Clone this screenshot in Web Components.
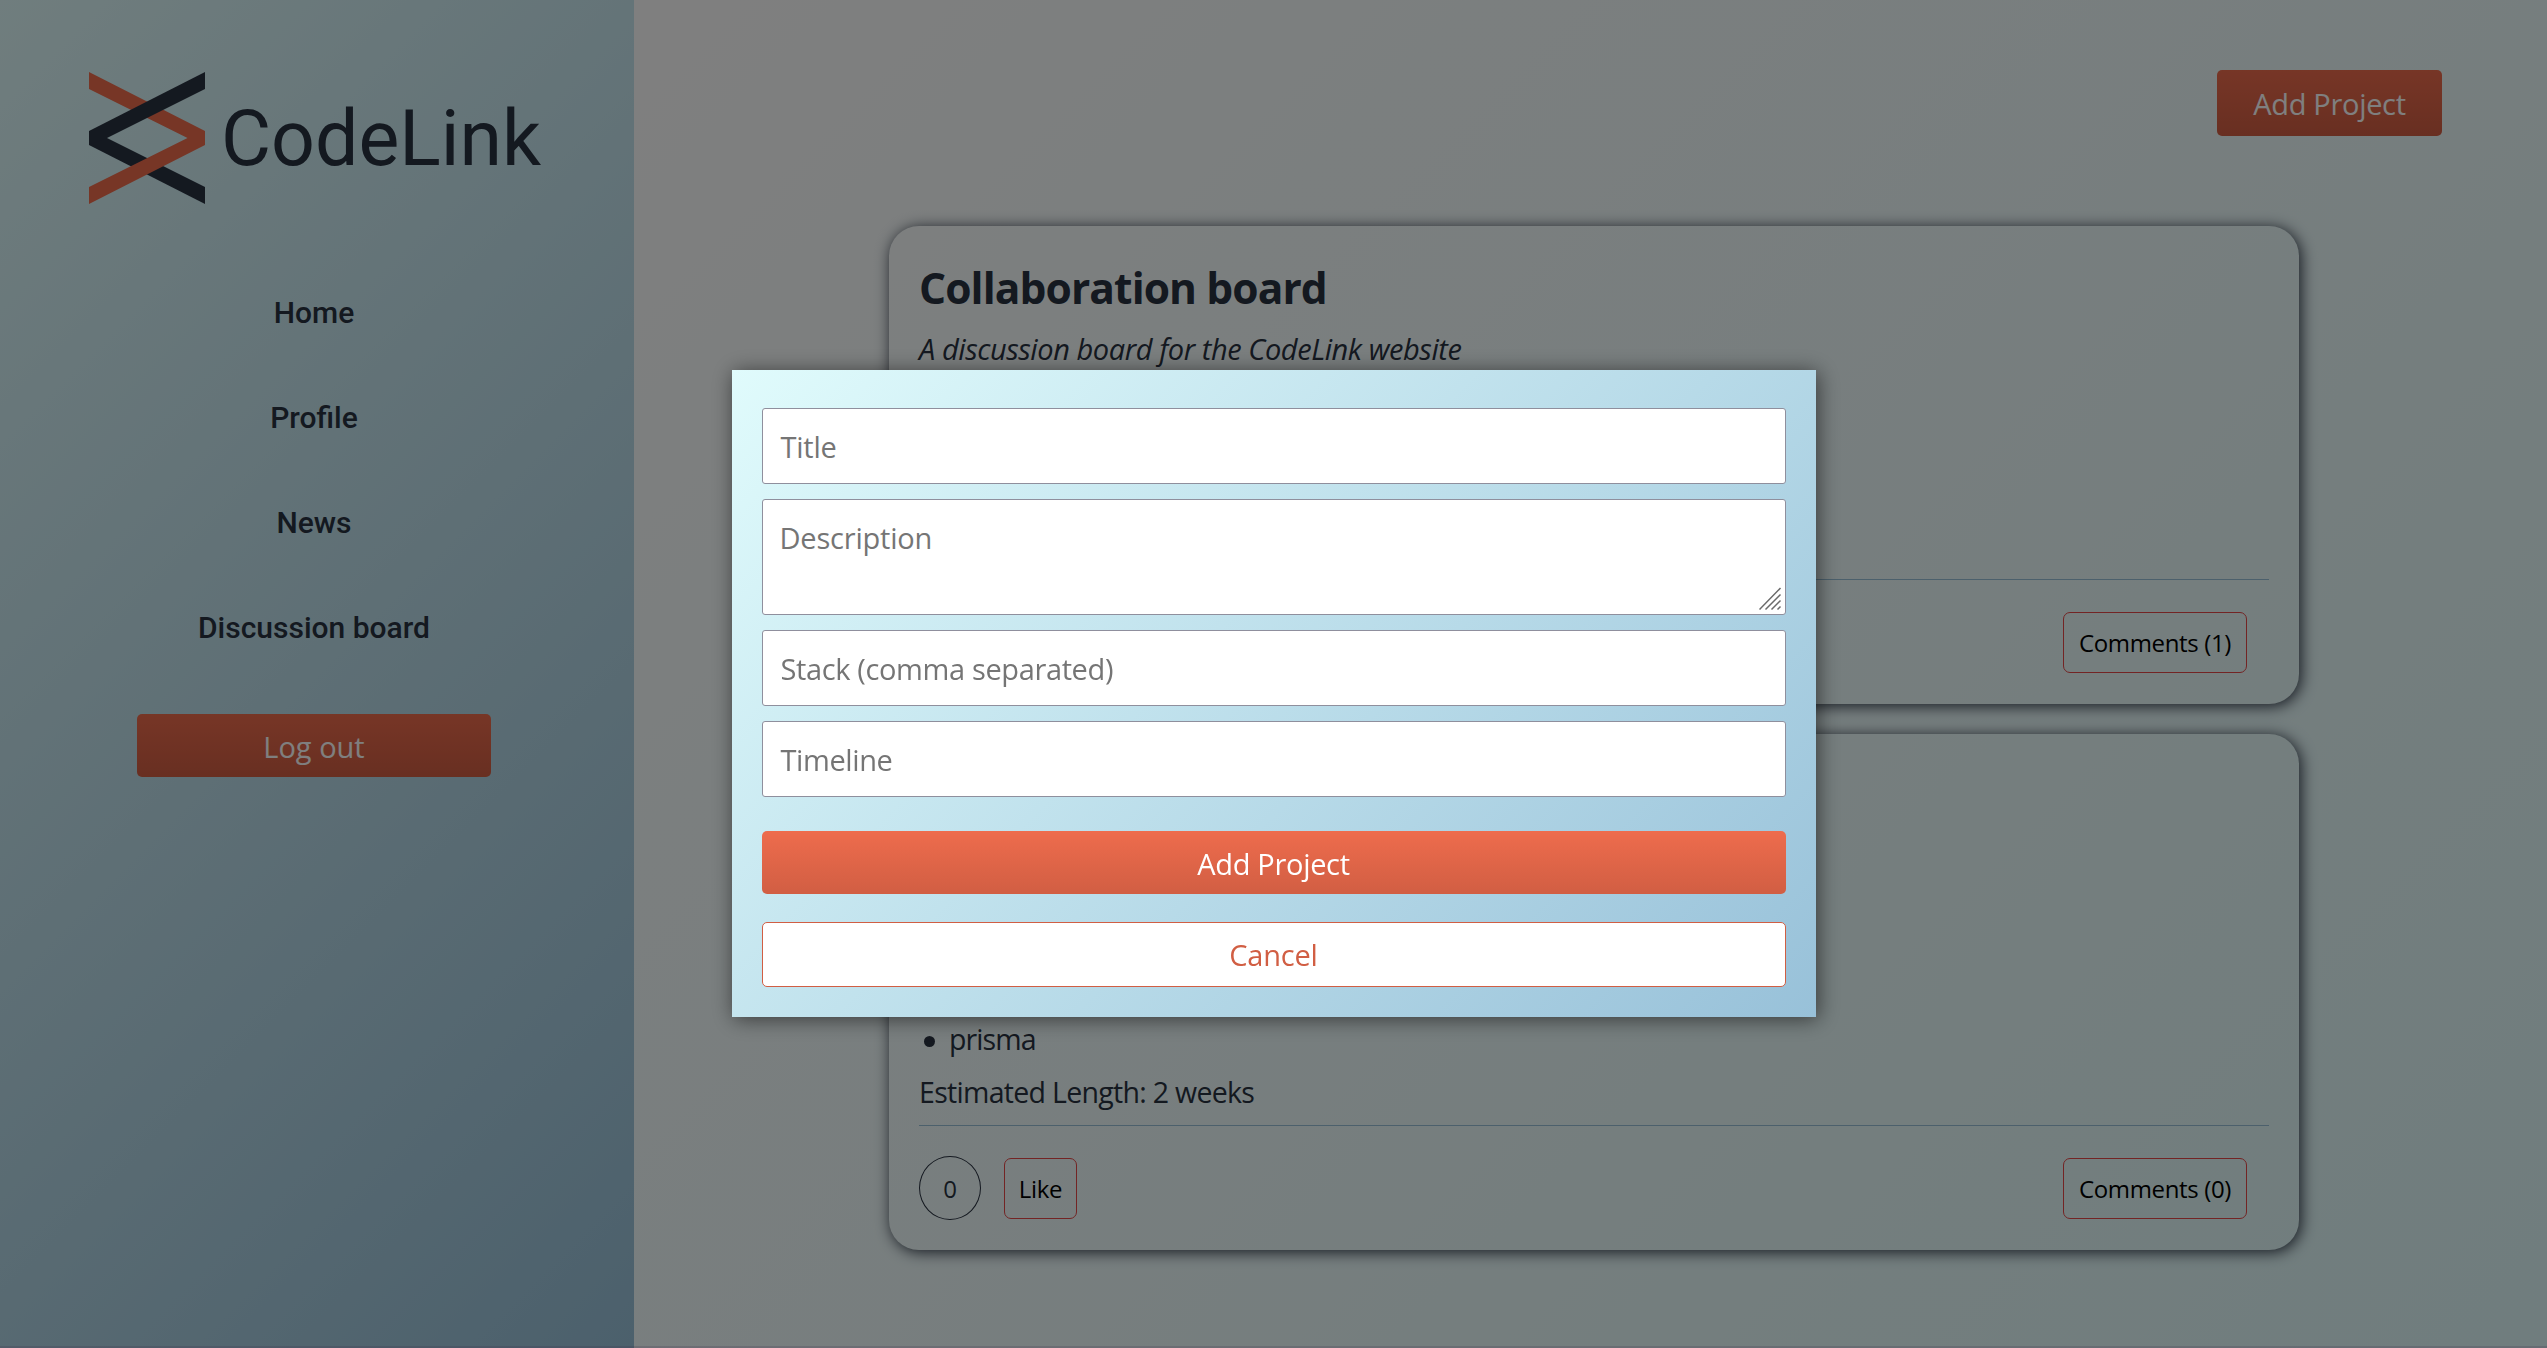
<!DOCTYPE html>
<html lang="en">
<head>
<meta charset="utf-8">
<title>CodeLink</title>
<style>
  :root {
    --dark: #293241;
    --orange: #ee6c4d;
    --orange-deep: #d15e43;
    --blue: #98c1d9;
    --ice: #e0fbfc;
  }
  html, body { margin: 0; height: 100%; overflow: hidden; }
  body { color: var(--dark); font-family: "Open Sans", "Noto Sans", sans-serif; font-size: 29px; }
</style>
</head>
<body>
<code-link-app></code-link-app>

<script>
const define = (name, html) => {
  const template = document.createElement('template');
  template.innerHTML = html;
  customElements.define(name, class extends HTMLElement {
    constructor() {
      super();
      this.attachShadow({ mode: 'open' }).append(template.content.cloneNode(true));
    }
  });
};

define('cl-button', `
  <style>
    :host { display: block; box-sizing: border-box; height: 63px; }
    button {
      display: flex; align-items: center; justify-content: center;
      box-sizing: border-box; width: 100%; height: 100%; margin: 0; padding: var(--drop, 2px) 0 0;
      border: 0; border-radius: 5px; color: #fff;
      background: linear-gradient(var(--orange), var(--orange-deep));
      font: 29px "Open Sans", "Noto Sans", sans-serif; letter-spacing: var(--track, -0.32px);
    }
    :host([outline]) button { background: #fff; color: var(--orange-deep); border: 1px solid var(--orange-deep); padding: 0; }
  </style>
  <button><slot></slot></button>`);

define('cl-small-button', `
  <style>
    :host { display: block; height: 61px; }
    button {
      box-sizing: border-box; width: 100%; height: 100%; padding: 0; margin: 0;
      border: 1px solid #e64848; border-radius: 7px; background: none; color: #000;
      font: 24px "Open Sans", "Noto Sans", sans-serif; letter-spacing: -0.34px;
    }
  </style>
  <button><slot></slot></button>`);

define('cl-logo', `
  <style>
    :host { display: flex; align-items: center; gap: 16px; height: 132px; }
    svg { display: block; width: 116px; height: 132px; flex: none; }
    span { font: 400 77px/132px Roboto, sans-serif; letter-spacing: 0; padding-top: 1px; }
  </style>
  <svg viewBox="0 0 116 132" aria-hidden="true">
    <polygon fill="#293241" points="0,59 0,73 116,132 116,115 18,66"/>
    <polygon fill="#ee6c4d" points="0,0 116,59 116,73 0,132 0,115 98.5,66 0,17"/>
    <polygon fill="#293241" points="116,0 0,59 0,73 18,66 116,17"/>
  </svg>
  <span>CodeLink</span>`);

define('cl-nav-link', `
  <style>
    :host { display: block; }
    a { color: inherit; text-decoration: none; font: 500 30px/35px Roboto, sans-serif; letter-spacing: 0; display: block; }
  </style>
  <a><slot></slot></a>`);

define('cl-sidebar', `
  <style>
    :host {
      display: flex; flex-direction: column; align-items: center; box-sizing: border-box;
      width: 634px; height: 100%; flex: none; padding: 72px 6px 0 0;
      background: linear-gradient(135deg, var(--ice), var(--blue));
    }
    cl-logo { align-self: flex-start; margin-left: 89px; }
    nav { display: flex; flex-direction: column; align-items: center; gap: 70px; margin-top: 91px; }
    cl-button { width: 354px; margin-top: 69px; --track: 0px; }
  </style>
  <cl-logo></cl-logo>
  <nav>
    <cl-nav-link>Home</cl-nav-link>
    <cl-nav-link>Profile</cl-nav-link>
    <cl-nav-link>News</cl-nav-link>
    <cl-nav-link>Discussion board</cl-nav-link>
  </nav>
  <cl-button>Log out</cl-button>`);

define('cl-card', `
  <style>
    :host {
      display: flex; flex-direction: column; box-sizing: border-box; padding: 30px;
      border-radius: 30px; box-shadow: 2px 2px 15px var(--dark);
    }
    .body { flex: 1; display: flex; flex-direction: column; }
    .line { height: 1px; background: var(--blue); }
    .foot { display: flex; align-items: center; height: 64px; margin-top: 30px; padding-right: 22px; }
    .likes { display: flex; align-items: center; gap: 23px; }
    .comments { width: 184px; margin-left: auto; }
    ::slotted([slot=comments]) { width: 184px; }
  </style>
  <div class="body"><slot></slot></div>
  <div class="line"></div>
  <div class="foot">
    <div class="likes"><slot name="likes"></slot></div>
    <div class="comments"><slot name="comments"></slot></div>
  </div>`);

define('cl-like', `
  <style>
    :host { display: flex; align-items: center; gap: 23px; }
    .count {
      display: flex; align-items: center; justify-content: center; box-sizing: border-box;
      width: 62px; height: 64px; border: 1px solid var(--dark); border-radius: 50%; font-size: 24px;
    }
    cl-small-button { width: 73px; }
  </style>
  <div class="count"><slot></slot></div>
  <cl-small-button>Like</cl-small-button>`);

define('cl-board', `
  <style>
    :host {
      display: flex; flex-direction: column; flex: 1; box-sizing: border-box; height: 100%;
      padding: 70px 105px 0 255px; background: linear-gradient(135deg, #fff, var(--ice));
    }
    .add { width: 225px; height: 66px; align-self: flex-end; --drop: 0px; }
    .list { display: flex; flex-direction: column; gap: 30px; margin-top: 90px; width: 1410px; }
    .first { height: 478px; }
    .second { height: 516px; }
    h2 { margin: 0; padding-top: 2px; font-size: 42.5px; line-height: 60px; font-weight: 700; letter-spacing: -0.9px; }
    .about { margin: 9px 0 0; line-height: 44px; font-style: italic; letter-spacing: -0.43px; }
    .details { margin-top: auto; font-size: 28.5px; line-height: 44px; }
    .tech { display: flex; align-items: center; letter-spacing: -0.9px; gap: 14px; padding-left: 5px; }
    .tech::before { content: ""; width: 11px; height: 11px; border-radius: 50%; background: currentColor; margin-top: 4px; }
    .length { margin: 9px 0 11px; letter-spacing: -0.7px; }
  </style>
  <cl-button class="add">Add Project</cl-button>
  <div class="list">
    <cl-card class="first">
      <h2>Collaboration board</h2>
      <p class="about">A discussion board for the CodeLink website</p>
      <cl-small-button slot="comments">Comments (1)</cl-small-button>
    </cl-card>
    <cl-card class="second">
      <div class="details">
        <div class="tech">prisma</div>
        <p class="length">Estimated Length: 2 weeks</p>
      </div>
      <cl-like slot="likes">0</cl-like>
      <cl-small-button slot="comments">Comments (0)</cl-small-button>
    </cl-card>
  </div>`);

define('cl-field', `
  <style>
    :host {
      display: flex; justify-content: space-between; box-sizing: border-box; height: 76px;
      padding: 1px 3px 2px 18px; border: 1px solid #8f8f9d; border-radius: 3px; background: #fff; color: #757575;
    }
    :host([multiline]) { height: 116px; padding-left: 17px; }
    span { line-height: 74px; }
    svg { display: none; width: 23px; height: 24px; align-self: flex-end; margin-bottom: 1px; }
    :host([multiline]) svg { display: block; }
  </style>
  <span><slot></slot></span>
  <svg viewBox="0 0 23 24" fill="none" stroke="#6a6a6a" stroke-width="1.5" aria-hidden="true">
    <path d="M0.5 22.5L21.5 1M6.5 22.5L21.5 7.5M12.5 22.5L21.5 13.5M18.5 22.5L21.5 19.5"/>
  </svg>`);

define('cl-modal', `
  <style>
    :host {
      position: fixed; inset: 0; display: flex; justify-content: center; align-items: flex-start;
      box-sizing: border-box; padding-top: 370px; background: rgba(0, 0, 0, .5);
      border-bottom: 2px solid rgba(60, 40, 70, .2);
    }
    form {
      display: flex; flex-direction: column; box-sizing: border-box; width: 1084px; height: 647px;
      padding: 38px 30px 30px; background: linear-gradient(135deg, var(--ice), var(--blue));
      box-shadow: 2px 2px 20px rgba(0, 0, 0, .55);
    }
    .fields { display: flex; flex-direction: column; gap: 15px; }
    .submit { margin-top: 34px; }
    .cancel { margin-top: 28px; height: 65px; --track: -0.2px; }
  </style>
  <form>
    <div class="fields">
      <cl-field style="letter-spacing:-.25px">Title</cl-field>
      <cl-field multiline style="letter-spacing:-.2px">Description</cl-field>
      <cl-field style="letter-spacing:-.37px">Stack (comma separated)</cl-field>
      <cl-field style="letter-spacing:-.4px">Timeline</cl-field>
    </div>
    <cl-button class="submit">Add Project</cl-button>
    <cl-button class="cancel" outline>Cancel</cl-button>
  </form>`);

define('code-link-app', `
  <style>
    :host { display: flex; width: 100%; height: 100vh; }
  </style>
  <cl-sidebar></cl-sidebar>
  <cl-board></cl-board>
  <cl-modal></cl-modal>`);
</script>
</body>
</html>
